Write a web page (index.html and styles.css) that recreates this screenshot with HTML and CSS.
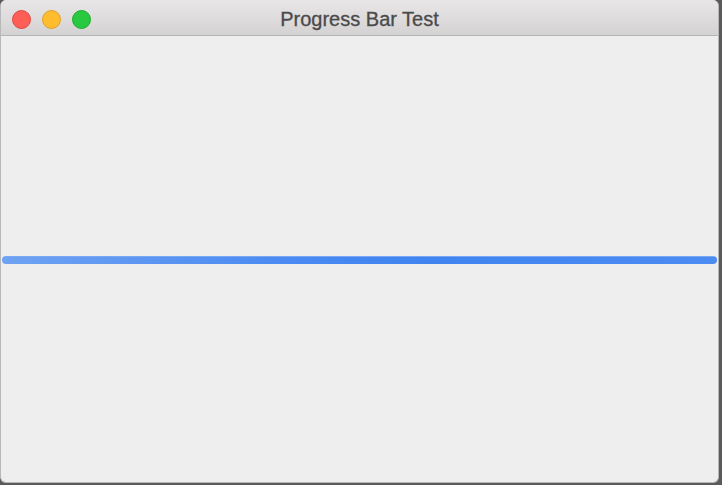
FILE: index.html
```html
<!DOCTYPE html>
<html>
<head>
<meta charset="utf-8">
<title>Progress Bar Test</title>
<link rel="stylesheet" href="styles.css">
</head>
<body>
<div class="window">
  <div class="titlebar">
    <div class="lights">
      <span class="light red"></span>
      <span class="light yellow"></span>
      <span class="light green"></span>
    </div>
    <div class="title">Progress Bar Test</div>
  </div>
  <div class="content">
    <div class="progress"><div class="fill"></div></div>
  </div>
</div>
</body>
</html>
```
FILE: styles.css
```css
html, body {
  margin: 0;
  padding: 0;
  width: 722px;
  height: 485px;
  overflow: hidden;
  background: #5a5a5a;
}
.window {
  width: 719px;
  height: 483px;
  background: #eeeeee;
  border-radius: 6px;
  overflow: hidden;
  display: flex;
  flex-direction: column;
  box-sizing: border-box;
  border: 1px solid #b8b8b8;
  border-top: none;
}
.titlebar {
  height: 35px;
  flex: none;
  background: linear-gradient(#e8e6e6, #d4d2d2);
  border-bottom: 1px solid #b4b4b4;
  position: relative;
  display: flex;
  align-items: center;
  justify-content: center;
}
.lights {
  position: absolute;
  left: 11px;
  top: 10px;
  display: flex;
  gap: 11px;
}
.light {
  width: 19px;
  height: 19px;
  border-radius: 50%;
  box-sizing: border-box;
}
.red { background: #fd5f57; border: 1px solid #e2463f; }
.yellow { background: #febc2e; border: 1px solid #dea123; }
.green { background: #28c840; border: 1px solid #1aab29; }
.title {
  font-family: "Liberation Sans", Arial, sans-serif;
  font-size: 20px;
  color: #4a4a4a;
  padding-top: 4px;
  -webkit-text-stroke: 0.3px #4a4a4a;
}
.content {
  flex: 1;
  display: flex;
  align-items: center;
  padding: 0 1px 0 1px;
}
.progress {
  width: 100%;
  height: 8px;
  margin-top: 1px;
  border-radius: 4px;
  background: #4a8af2;
  overflow: hidden;
}
.fill {
  height: 100%;
  background: linear-gradient(90deg, #6ea2f2, #4a8af2 40%, #3f84f0 60%, #4c8cf2);
  border-top: 1px solid #78a8f4;
  box-sizing: border-box;
}
```
